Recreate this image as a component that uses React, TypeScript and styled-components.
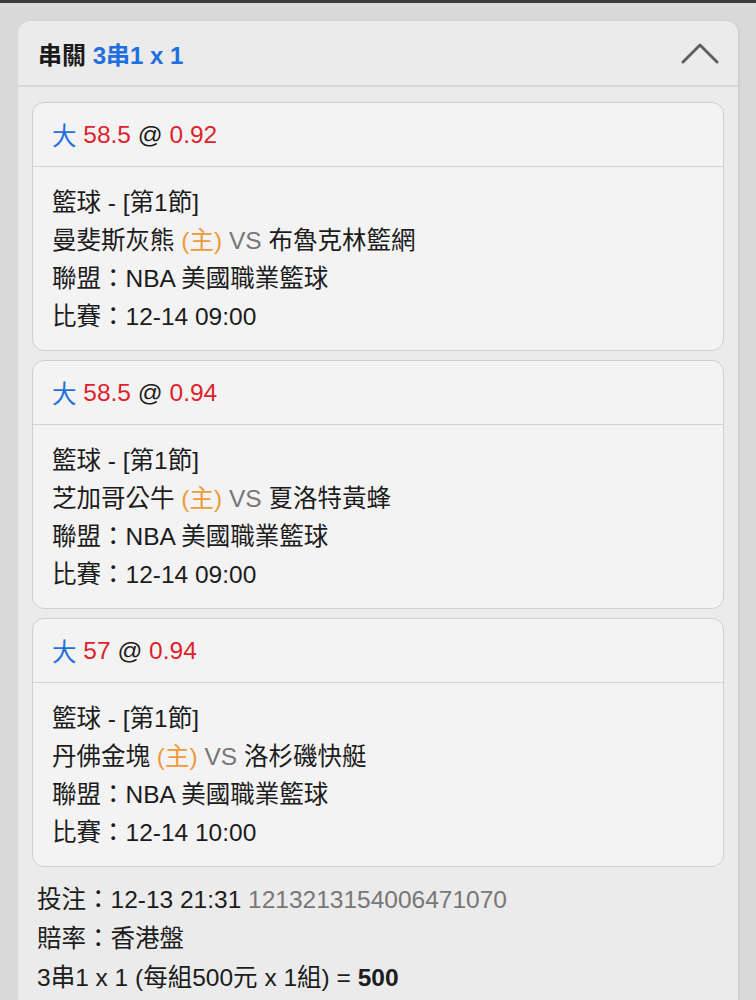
import styled, { createGlobalStyle } from "styled-components";

type Bet = {
  pick: string;
  line: string;
  odds: string;
  home: string;
  away: string;
  time: string;
};

const bets: Bet[] = [
  { pick: "大", line: "58.5", odds: "0.92", home: "曼斐斯灰熊", away: "布魯克林籃網", time: "12-14 09:00" },
  { pick: "大", line: "58.5", odds: "0.94", home: "芝加哥公牛", away: "夏洛特黃蜂", time: "12-14 09:00" },
  { pick: "大", line: "57", odds: "0.94", home: "丹佛金塊", away: "洛杉磯快艇", time: "12-14 10:00" },
];

const GlobalStyle = createGlobalStyle`
  html, body {
    margin: 0;
    padding: 0;
    background: #d9d9d9;
  }
  body {
    font-family: "Liberation Sans", "Noto Sans CJK TC", sans-serif;
    color: #1c1c1c;
  }
`;

const TopBar = styled.div`
  height: 3px;
  background: #3c3c3c;
`;

const Page = styled.div`
  padding: 18px 18px 0;
`;

const Panel = styled.div`
  background: #ebebeb;
  border-radius: 12px 12px 0 0;
  box-shadow: 1px 0 2px rgba(0, 0, 0, 0.08);
  min-height: 980px;
`;

const PanelHeader = styled.div`
  display: flex;
  align-items: center;
  justify-content: space-between;
  height: 64px;
  padding: 0 19px 0 20px;
  border-bottom: 2px solid #d6d6d6;
`;

const Title = styled.div`
  font-size: 24px;
  font-weight: bold;
  color: #1a1a1a;
`;

const Blue = styled.span`
  color: #1f6fe0;
`;

const Red = styled.span`
  color: #df1f2d;
`;

const Orange = styled.span`
  color: #ef9a3a;
`;

const Grey = styled.span`
  color: #777777;
`;

const CardList = styled.div`
  display: flex;
  flex-direction: column;
  gap: 9px;
  padding: 15px 14px 0;
`;

const Card = styled.div`
  background: #f3f3f3;
  border: 1px solid #cfcfcf;
  border-radius: 12px;
`;

const CardHeader = styled.div`
  display: flex;
  align-items: center;
  height: 63px;
  padding: 0 19px;
  font-size: 24.5px;
  border-bottom: 1px solid #d2d2d2;
`;

const CardBody = styled.div`
  padding: 17px 19px 14px;
`;

const Line = styled.div<{ $h?: number }>`
  font-size: 24.5px;
  line-height: ${({ $h }) => $h ?? 38}px;
  white-space: nowrap;
`;

const Footer = styled.div`
  padding: 13px 19px 0;
`;

const Chevron = () => (
  <svg width="38" height="24" viewBox="0 0 38 24">
    <polyline
      points="2,21 19,4 36,21"
      fill="none"
      stroke="#606060"
      strokeWidth="3"
      strokeLinecap="round"
      strokeLinejoin="round"
    />
  </svg>
);

const BetCard = ({ bet }: { bet: Bet }) => (
  <Card>
    <CardHeader>
      <Blue>{bet.pick}</Blue>&nbsp;<Red>{bet.line}</Red>&nbsp;@&nbsp;<Red>{bet.odds}</Red>
    </CardHeader>
    <CardBody>
      <Line>籃球 - [第1節]</Line>
      <Line>
        {bet.home} <Orange>(主)</Orange> <Grey>VS</Grey> {bet.away}
      </Line>
      <Line>聯盟：NBA 美國職業籃球</Line>
      <Line>比賽：{bet.time}</Line>
    </CardBody>
  </Card>
);

const App = () => {
  return (
    <>
      <GlobalStyle />
      <TopBar />
      <Page>
        <Panel>
          <PanelHeader>
            <Title>
              串關 <Blue>3串1 x 1</Blue>
            </Title>
            <Chevron />
          </PanelHeader>
          <CardList>
            {bets.map((b, i) => (
              <BetCard key={i} bet={b} />
            ))}
          </CardList>
          <Footer>
            <Line $h={39}>
              投注：12-13 21:31 <Grey>1213213154006471070</Grey>
            </Line>
            <Line $h={39}>賠率：香港盤</Line>
            <Line $h={39}>
              3串1 x 1 (每組500元 x 1組) = <b>500</b>
            </Line>
          </Footer>
        </Panel>
      </Page>
    </>
  );
};

export default App;
